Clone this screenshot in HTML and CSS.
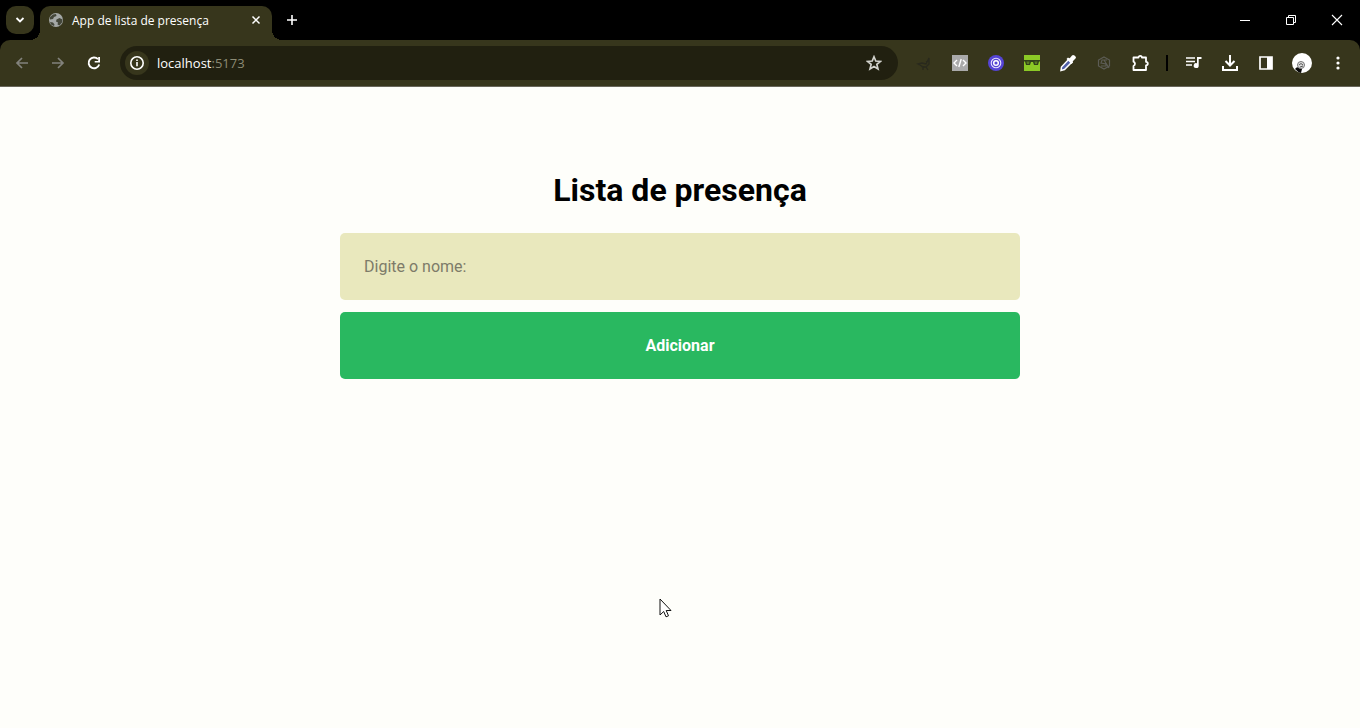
FILE: index.html
```html
<!DOCTYPE html>
<html lang="pt-BR">
<head>
<meta charset="utf-8">
<title>App de lista de presença</title>
<link rel="stylesheet" href="styles.css">
</head>
<body>
<header class="browser">
  <div class="tabstrip">
    <button class="tab-search" aria-label="Pesquisar guias"><svg width="10" height="8" viewBox="0 0 10 8"><path d="M1.500 2 5 5.500 8.500 2" fill="none" stroke="#fff" stroke-width="1.800"/></svg></button>
    <div class="tab">
      <svg width="16" height="16" viewBox="0 0 16 16"><circle cx="8" cy="8" r="7" fill="#a4a8a6"/><path d="M2 5 5 2.500l3-.5.500 2-2.500 1-1 2-3 .5zM8.500 7.500l3-1.500 3 1.500-.5 3-2.500 3-2-1 .5-2-2-1zM2 10l3 .5 1.500 2L6 14 3 12.500z" fill="#44473a"/></svg>
      <span class="tab-title">App de lista de presença</span>
      <button class="plain" aria-label="Fechar guia"><svg width="16" height="16" viewBox="0 0 16 16"><path d="m4.500 4.500 7 7m0-7-7 7" stroke="#fff" stroke-width="1.500"/></svg></button>
    </div>
    <button class="plain new-tab" aria-label="Nova guia"><svg width="16" height="16" viewBox="0 0 16 16"><path d="M8 3v10M3 8h10" stroke="#fff" stroke-width="1.600"/></svg></button>
    <div class="window-controls">
      <button class="plain" aria-label="Minimizar"><svg width="12" height="12" viewBox="0 0 12 12"><path d="M1 6.500h10" stroke="#fff"/></svg></button>
      <button class="plain" aria-label="Restaurar"><svg width="12" height="12" viewBox="0 0 12 12" fill="none" stroke="#fff"><path d="M1.500 3.500h7v7h-7zM3.500 3.500v-2h7v7h-2"/></svg></button>
      <button class="plain" aria-label="Fechar"><svg width="12" height="12" viewBox="0 0 12 12"><path d="m1 1 10 10m0-10L1 11" stroke="#fff" stroke-width="1.100"/></svg></button>
    </div>
  </div>
  <div class="toolbar">
    <nav class="navigation" aria-label="Navegação">
      <button class="plain" aria-label="Voltar"><svg width="16" height="16" viewBox="0 0 16 16"><path d="M14 8H3m5-5L3 8l5 5" fill="none" stroke="#82827c" stroke-width="1.700"/></svg></button>
      <button class="plain" aria-label="Avançar"><svg width="16" height="16" viewBox="0 0 16 16"><path d="M2 8h11M8 3l5 5-5 5" fill="none" stroke="#82827c" stroke-width="1.700"/></svg></button>
      <button class="plain" aria-label="Recarregar"><svg width="16" height="16" viewBox="0 0 16 16"><path d="M13.200 9.500A5.400 5.400 0 1 1 12 4.200" fill="none" stroke="#fff" stroke-width="1.900"/><path d="M14 2v5.500H8.700V6h3.500V2z" fill="#fff"/></svg></button>
    </nav>
    <div class="address">
      <button class="site-info" aria-label="Informações do site"><svg width="16" height="16" viewBox="0 0 16 16"><circle cx="8" cy="8" r="6.200" fill="none" stroke="#fff" stroke-width="1.600"/><path d="M7.200 7h1.600v4.300H7.200zM7.200 4.500h1.600V6H7.200z" fill="#fff"/></svg></button>
      <span class="url">localhost<span class="port">:5173</span></span>
      <button class="plain" aria-label="Adicionar aos favoritos"><svg width="16" height="16" viewBox="0 0 18 18"><path d="m9 2 2 4.800 5.200.4-4 3.400 1.300 5.100L9 13l-4.500 2.700 1.300-5.100-4-3.400L7 6.800z" fill="none" stroke="#d2d2cc" stroke-width="1.900"/></svg></button>
    </div>
    <div class="tools">
      <button class="plain" aria-label="Extensão"><svg width="18" height="18" viewBox="0 0 18 18"><path d="m3 10 4-1 4 1 3-6v6l-3 3H8l-3-2zM8 12v4m3-3 2 3M11 8l3-2" fill="none" stroke="#29291d" stroke-width="1.300"/></svg></button>
      <button class="plain" aria-label="Código"><svg width="16" height="16" viewBox="0 0 16 16"><path d="M0 0h16v16H0z" fill="#aaa"/><path d="M5 5 2 8l3 3m6-6 3 3-3 3M9.200 4 6.800 12" fill="none" stroke="#fff" stroke-width="1.400"/></svg></button>
      <button class="plain" aria-label="Alvo"><svg width="16" height="16" viewBox="0 0 16 16"><circle cx="8" cy="8" r="8" fill="#5544d5"/><circle cx="8" cy="8" r="4.800" fill="none" stroke="#e8e3ff" stroke-width="1.100"/><circle cx="8" cy="8" r="2.300" fill="none" stroke="#fff" stroke-width="1.500"/></svg></button>
      <button class="plain" aria-label="Óculos"><svg width="16" height="16" viewBox="0 0 16 16"><path d="M0 0h16v16H0z" fill="#8bc926"/><path d="M0 5h16v1.500h-1L14 10h-4L9 7H7l-1 3H2L1 6.500H0z" fill="#31411a"/><path d="M2.500 6.500h3L5 9H3zM10.500 6.500h3L13 9h-2z" fill="#597b24"/></svg></button>
      <button class="plain" aria-label="Conta-gotas"><svg width="18" height="18" viewBox="0 0 18 18"><path d="m10 5 3 3-7.500 7.500L2 16.500l.5-3.500z" fill="#5261a8" stroke="#fff" stroke-width="1.500"/><path d="m10.500 4.500 2.500-3q1-1 2.500 0l1 1q1 1 0 2l-3 3 .5 1-1.500 1.500-5-5L9 3.500z" fill="#fff"/></svg></button>
      <button class="plain" aria-label="Extensão inativa"><svg width="16" height="16" viewBox="0 0 16 16"><path d="m8 2 5.500 3v6L8 14l-5.500-3V5zM11 5H6l-1 3 5 1v2H5m3-6 5 8" fill="none" stroke="#5c5c55" stroke-width="1.200"/></svg></button>
      <button class="plain" aria-label="Extensões"><svg width="20" height="20" viewBox="0 0 20 20"><path d="M3.500 4.500h5a1.700 1.700 0 0 1 3.400 0H16v4.300a1.800 1.800 0 0 1 0 3.600V17H3.500v-4a2.300 2.300 0 0 0 0-4.300z" fill="none" stroke="#fff" stroke-width="1.800" stroke-linejoin="round"/></svg></button>
      <span class="divider"></span>
      <button class="plain" aria-label="Controle de mídia"><svg width="18" height="18" viewBox="0 0 18 18"><path d="M1 4h9M1 7.500h9M1 11h6" stroke="#fff" stroke-width="1.700"/><path d="M12 3h4.500v2h-2.800v6.500a2.500 2.500 0 1 1-1.700-2.300z" fill="#fff"/></svg></button>
      <button class="plain" aria-label="Downloads"><svg width="18" height="18" viewBox="0 0 18 18"><path d="M9 1v10M4.500 7 9 11.500 13.500 7M2 12v4h14v-4" fill="none" stroke="#fff" stroke-width="2"/></svg></button>
      <button class="plain" aria-label="Painel lateral"><svg width="16" height="16" viewBox="0 0 16 16"><path d="M2 2h12v12H2z" fill="none" stroke="#fff" stroke-width="1.700"/><path d="M9 2h5v12H9z" fill="#fff"/></svg></button>
      <button class="plain" aria-label="Perfil"><svg width="20" height="20" viewBox="0 0 20 20"><circle cx="10" cy="10" r="10" fill="#fff"/><path d="M3 16q2-3 4-1l3 1-1 3.900Q6 19.500 3 16z" fill="#080808"/><circle cx="9" cy="12" r="3.500" fill="#ddd" stroke="#777"/><path d="M7 12q2-3 4 0M8 14l3-1" fill="none" stroke="#555"/></svg></button>
      <button class="plain" aria-label="Menu"><svg width="16" height="16" viewBox="0 0 16 16" fill="#fff"><circle cx="8" cy="3" r="1.600"/><circle cx="8" cy="8" r="1.600"/><circle cx="8" cy="13" r="1.600"/></svg></button>
    </div>
  </div>
</header>
<main class="page">
  <h1>Lista de presença</h1>
  <form class="attendance">
    <input type="text" aria-label="Nome" placeholder="Digite o nome:">
    <button type="button" class="add">Adicionar</button>
  </form>
</main>
<svg class="pointer" width="14" height="22" viewBox="0 0 14 22" aria-hidden="true"><path d="M1 1v16l3.700-3.500 2.300 5.300 2.500-1-2.300-5.300H12z" fill="#fff" stroke="#111"/></svg>
</body>
</html>
```
FILE: styles.css
```css
* { box-sizing: border-box; }
body { margin: 0; min-height: 100vh; background: #fefefa; font-family: Roboto, sans-serif; color: #000; }
button, input { font: inherit; border: 0; }
svg { display: block; flex: none; }
.plain { display: grid; place-items: center; padding: 0; background: none; }
.browser { background: #000; color: #fff; font-family: "Open Sans", sans-serif; }
.tabstrip { display: flex; align-items: center; height: 40px; padding-left: 6px; }
.tab-search { display: grid; place-items: center; width: 28px; height: 28px; padding: 0; border-radius: 10px; background: #37361c; }
.tab { position: relative; display: flex; align-items: center; align-self: flex-end; gap: 8px; width: 232px; height: 34px; margin-left: 6px; padding: 0 8px 6px; border-radius: 10px 10px 0 0; background: #37361c; }
.tab::before, .tab::after { content: ""; position: absolute; bottom: 0; width: 10px; height: 10px; }
.tab::before { right: 100%; background: radial-gradient(circle at 0 0, transparent 10px, #37361c 10px); }
.tab::after { left: 100%; background: radial-gradient(circle at 100% 0, transparent 10px, #37361c 10px); }
.tab-title { flex: 1; font-size: 12px; white-space: nowrap; }
.new-tab { margin-left: 12px; }
.window-controls { display: flex; margin-left: auto; }
.window-controls .plain { width: 46px; height: 40px; }
.toolbar { display: flex; align-items: center; height: 47px; padding: 0 12px; border-radius: 10px 10px 0 0; border-bottom: 1px solid #68665a; background: #37361c; }
.navigation { display: flex; gap: 16px; }
.navigation .plain { width: 20px; height: 20px; }
.address { display: flex; align-items: center; flex: 1; height: 34px; margin-left: 16px; padding: 0 16px 0 5px; border-radius: 17px; background: #212010; }
.site-info { display: grid; place-items: center; width: 24px; height: 24px; padding: 0; border-radius: 50%; background: #37361c; }
.url { flex: 1; margin-left: 8px; font-size: 13px; }
.port { color: #8c8b75; }
.tools { display: flex; align-items: center; gap: 16px; margin-left: 16px; }
.tools .plain { width: 20px; height: 20px; }
.divider { width: 2px; height: 16px; background: #000; }
.page { max-width: 680px; margin: 0 auto; padding: 84px 0 40px; }
h1 { margin: 0 0 24px; font-size: 32px; line-height: 38px; font-weight: 700; text-align: center; }
.attendance { display: grid; gap: 12px; }
.attendance input, .add { width: 100%; height: 67px; padding: 24px; border-radius: 5px; font-size: 16px; line-height: 19px; }
.attendance input { background: #e9e8bd; }
.attendance input::placeholder { color: #7d7b69; opacity: 1; }
.add { background: #29b860; color: #fff; font-weight: 700; }
.pointer { position: absolute; left: 659px; top: 598px; }
```
